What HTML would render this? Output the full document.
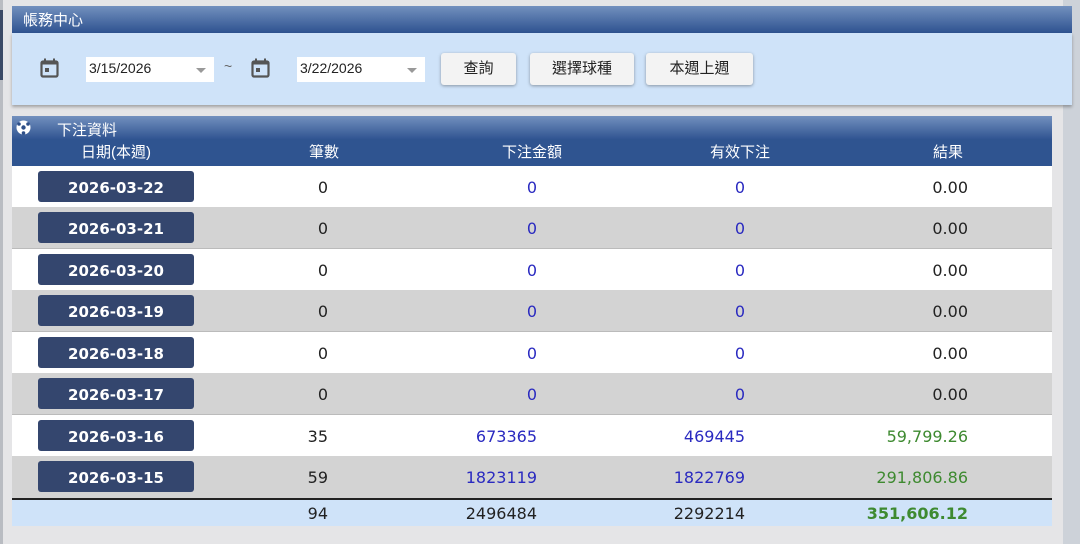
<!DOCTYPE html>
<html><head><meta charset="utf-8"><style>
*{margin:0;padding:0;box-sizing:border-box}
body{width:1080px;height:544px;background:#e5e5e7;position:relative;overflow:hidden;font-family:"Liberation Sans","Noto Sans CJK TC",sans-serif}
.abs{position:absolute}
.hdr{background:linear-gradient(#7290be,#2e5290);color:#fff;font-size:15px}
.btn{position:absolute;top:53px;height:32px;background:#f3f3f3;border-radius:3px;box-shadow:0 1px 3px rgba(0,0,0,.35);font-size:15px;color:#222;text-align:center;line-height:32px}
.inp{position:absolute;top:57px;height:25px;background:#fff;font-size:14px;color:#222;line-height:22px;padding-left:3px}
.inp:after{content:"";position:absolute;right:8px;top:11px;border-left:5px solid transparent;border-right:5px solid transparent;border-top:5px solid #999}
.row{position:absolute;left:12px;width:1040px;height:42px;border-bottom:1px solid #bbb}
.d{position:absolute;left:26px;top:5px;width:156px;height:31px;background:#34466e;border-radius:3px;color:#fff;font:bold 15px "DejaVu Sans",sans-serif;text-align:center;line-height:34px}
.n{position:absolute;top:12px;font:16px "DejaVu Sans",sans-serif;text-align:right;color:#222}
.c2{right:724px}.c3{right:515px;color:#2a2ac0}.c4{right:307px;color:#2a2ac0}.c5{right:84px}
.g{color:#3e8a30}
</style></head><body>
<div class="abs" style="left:0;top:0;width:3px;height:544px;background:#b9bcc2"></div>
<div class="abs" style="left:0;top:10px;width:3px;height:70px;background:#3b4a66"></div>
<div class="abs" style="left:1063px;top:0;width:17px;height:544px;background:#cdd2d9"></div>
<div class="abs hdr" style="left:12px;top:6px;width:1060px;height:27px;padding:3px 0 0 11px">帳務中心</div>
<div class="abs" style="left:12px;top:33px;width:1060px;height:72px;background:#cfe3f9;box-shadow:0 2px 3px rgba(0,0,0,.3)"></div>
<svg class="abs" style="left:40px;top:58px" width="19" height="20" viewBox="0 0 19 20"><rect x="1.5" y="3.5" width="16" height="15" rx="1.5" fill="none" stroke="#555" stroke-width="2.2"/><rect x="1.5" y="3.5" width="16" height="3" fill="#555"/><rect x="4" y="0.5" width="2" height="4" fill="#555"/><rect x="13" y="0.5" width="2" height="4" fill="#555"/><rect x="5" y="10" width="4" height="4" fill="#555"/></svg>
<div class="inp" style="left:86px;width:128px">3/15/2026</div>
<div class="abs" style="left:224px;top:58px;font-size:14px;color:#666">~</div>
<svg class="abs" style="left:251px;top:58px" width="19" height="20" viewBox="0 0 19 20"><rect x="1.5" y="3.5" width="16" height="15" rx="1.5" fill="none" stroke="#555" stroke-width="2.2"/><rect x="1.5" y="3.5" width="16" height="3" fill="#555"/><rect x="4" y="0.5" width="2" height="4" fill="#555"/><rect x="13" y="0.5" width="2" height="4" fill="#555"/><rect x="5" y="10" width="4" height="4" fill="#555"/></svg>
<div class="inp" style="left:297px;width:128px">3/22/2026</div>
<div class="btn" style="left:441px;width:75px">查詢</div>
<div class="btn" style="left:530px;width:104px">選擇球種</div>
<div class="btn" style="left:646px;width:107px">本週上週</div>

<div class="abs hdr" style="left:12px;top:116px;width:1040px;height:24px;padding:3px 0 0 45px">下注資料</div>
<svg class="abs" style="left:16px;top:120px" width="15" height="15" viewBox="0 0 15 15"><circle cx="7.5" cy="7.5" r="7" fill="#fff"/><circle cx="7.5" cy="7.5" r="2.2" fill="#2e4f88"/><circle cx="3" cy="4" r="1.8" fill="#2e4f88"/><circle cx="12" cy="4" r="1.8" fill="#2e4f88"/><circle cx="7.5" cy="13" r="1.8" fill="#2e4f88"/></svg>
<div class="abs" style="left:12px;top:139px;width:1040px;height:27px;background:#2f5490;color:#fff;font-size:15px;line-height:27px">
<span class="abs" style="left:0;width:208px;text-align:center">日期(本週)</span>
<span class="abs" style="left:208px;width:208px;text-align:center">筆數</span>
<span class="abs" style="left:416px;width:208px;text-align:center">下注金額</span>
<span class="abs" style="left:624px;width:208px;text-align:center">有效下注</span>
<span class="abs" style="left:832px;width:208px;text-align:center">結果</span>
</div>

<div class="row" style="top:166px;background:#fff"><div class="d">2026-03-22</div><span class="n c2">0</span><span class="n c3">0</span><span class="n c4">0</span><span class="n c5">0.00</span></div>
<div class="row" style="top:207px;background:#d3d3d3"><div class="d">2026-03-21</div><span class="n c2">0</span><span class="n c3">0</span><span class="n c4">0</span><span class="n c5">0.00</span></div>
<div class="row" style="top:249px;background:#fff"><div class="d">2026-03-20</div><span class="n c2">0</span><span class="n c3">0</span><span class="n c4">0</span><span class="n c5">0.00</span></div>
<div class="row" style="top:290px;background:#d3d3d3"><div class="d">2026-03-19</div><span class="n c2">0</span><span class="n c3">0</span><span class="n c4">0</span><span class="n c5">0.00</span></div>
<div class="row" style="top:332px;background:#fff"><div class="d">2026-03-18</div><span class="n c2">0</span><span class="n c3">0</span><span class="n c4">0</span><span class="n c5">0.00</span></div>
<div class="row" style="top:373px;background:#d3d3d3"><div class="d">2026-03-17</div><span class="n c2">0</span><span class="n c3">0</span><span class="n c4">0</span><span class="n c5">0.00</span></div>
<div class="row" style="top:415px;background:#fff"><div class="d">2026-03-16</div><span class="n c2">35</span><span class="n c3">673365</span><span class="n c4">469445</span><span class="n c5 g">59,799.26</span></div>
<div class="row" style="top:456px;background:#d3d3d3;border-bottom:none"><div class="d">2026-03-15</div><span class="n c2">59</span><span class="n c3">1823119</span><span class="n c4">1822769</span><span class="n c5 g">291,806.86</span></div>
<div class="abs" style="left:12px;top:498px;width:1040px;height:2px;background:#222"></div>
<div class="row" style="top:500px;height:26px;background:#cfe3f9;border:none"><span class="n c2" style="top:4px">94</span><span class="n c3" style="top:4px;color:#222">2496484</span><span class="n c4" style="top:4px;color:#222">2292214</span><span class="n c5 g" style="top:4px;font-weight:bold">351,606.12</span></div>
</body></html>
